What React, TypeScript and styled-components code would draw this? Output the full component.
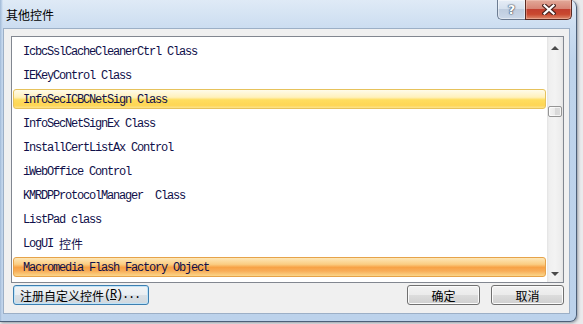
import React from "react";
import styled, { createGlobalStyle, css } from "styled-components";

type Tone = "plain" | "selected" | "hot";

interface ControlItem {
  label: string;
  tone?: Tone;
}

const controls: ControlItem[] = [
  { label: "IcbcSslCacheCleanerCtrl Class" },
  { label: "IEKeyControl Class" },
  { label: "InfoSecICBCNetSign Class", tone: "selected" },
  { label: "InfoSecNetSignEx Class" },
  { label: "InstallCertListAx Control" },
  { label: "iWebOffice Control" },
  { label: "KMRDPProtocolManager  Class" },
  { label: "ListPad class" },
  { label: "LogUI 控件" },
  { label: "Macromedia Flash Factory Object", tone: "hot" },
];

// where the list is scrolled to, as a share of the track
const scrollRatio = 0.27;
const trackHeight = 192;

const monoStack = `"Liberation Mono", "Courier New", monospace`;
const cjkStack = `"Noto Sans CJK SC", "Noto Sans", sans-serif`;

function splitCjk(text: string) {
  return text.split(/([\u4e00-\u9fff]+)/).filter(Boolean);
}

export default function App() {
  return (
    <>
      <GlobalStyle />
      <Window>
        <TitleBar>
          <Title>其他控件</Title>
          <CaptionButtons>
            <HelpButton>?</HelpButton>
            <CloseButton>
              <svg width="14" height="11" viewBox="0 0 14 11">
                <path d="M2.5 1.5 L11.5 9.5 M11.5 1.5 L2.5 9.5" stroke="#4b2621" strokeWidth="4.4" strokeLinecap="square" />
                <path d="M2.5 1.5 L11.5 9.5 M11.5 1.5 L2.5 9.5" stroke="#ffffff" strokeWidth="2.2" strokeLinecap="square" />
              </svg>
            </CloseButton>
          </CaptionButtons>
        </TitleBar>
        <Client>
          <ListBox>
            <Rows>
              {controls.map((item) => (
                <Row key={item.label}>
                  <Item tone={item.tone ?? "plain"}>
                    {splitCjk(item.label).map((part, i) =>
                      /[\u4e00-\u9fff]/.test(part) ? <Cjk key={i}>{part}</Cjk> : <span key={i}>{part}</span>
                    )}
                  </Item>
                </Row>
              ))}
            </Rows>
            <ScrollBar>
              <ArrowButton>
                <Arrow dir="up" />
              </ArrowButton>
              <Track>
                <Thumb style={{ marginTop: Math.round(trackHeight * scrollRatio) }} />
              </Track>
              <ArrowButton>
                <Arrow dir="down" />
              </ArrowButton>
            </ScrollBar>
          </ListBox>
          <ButtonRow>
            <Button focused wide>
              <Cjk>注册自定义控件</Cjk>
              <Latin>
                (<u>R</u>)...
              </Latin>
            </Button>
            <RightButtons>
              <Button>确定</Button>
              <Button>取消</Button>
            </RightButtons>
          </ButtonRow>
        </Client>
      </Window>
    </>
  );
}

const GlobalStyle = createGlobalStyle`
  html, body {
    margin: 0;
    padding: 0;
    background: #e9eaec;
    overflow: hidden;
  }
  * {
    box-sizing: border-box;
  }
  #root {
    width: 583px;
    height: 324px;
  }
`;

const Window = styled.div`
  width: 577px;
  height: 322px;
  display: flex;
  flex-direction: column;
  padding: 0 6px 7px 3px;
  border-right: 1px solid #4c5f78;
  border-bottom: 1px solid #4c5f78;
  border-radius: 0 7px 7px 0;
  background: linear-gradient(to right, #9fb8d6 0, #c3d6ec 2px, transparent 3px),
    linear-gradient(to bottom, #dfeaf6 0, #cddef1 26px, #bfd4ec 60px, #bcd2eb 100%);
  box-shadow: 1px 1px 3px rgba(40, 50, 70, 0.45);
`;

const TitleBar = styled.div`
  height: 28px;
  display: flex;
  align-items: flex-start;
`;

const Title = styled.div`
  margin-top: 7px;
  padding-left: 3px;
  font-family: ${cjkStack};
  font-size: 12px;
  line-height: 16px;
  color: #000;
`;

const CaptionButtons = styled.div`
  margin-left: auto;
  margin-right: -2px;
  display: flex;
  height: 20px;
`;

const HelpButton = styled.div`
  width: 28px;
  height: 20px;
  display: flex;
  align-items: center;
  justify-content: center;
  border: 1px solid #6c7c92;
  border-top: none;
  border-right: none;
  border-radius: 0 0 0 5px;
  background: linear-gradient(to bottom, #e6edf6 0%, #d6e1ee 45%, #bfcddf 50%, #cbd8e9 100%);
  box-shadow: inset 0 0 0 1px rgba(255, 255, 255, 0.45);
  font-family: "DejaVu Sans", sans-serif;
  font-weight: bold;
  font-size: 13px;
  color: #fff;
  text-shadow: 0 0 1px #3f4e63, 0 0 1px #3f4e63, 0 0 2px #3f4e63;
`;

const CloseButton = styled.div`
  width: 47px;
  height: 20px;
  display: flex;
  align-items: center;
  justify-content: center;
  border: 1px solid #5a2a22;
  border-top: none;
  border-radius: 0 0 5px 0;
  background: linear-gradient(to bottom, #e2a999 0%, #d78575 45%, #c2402f 50%, #c9482f 75%, #dd8a6c 100%);
  box-shadow: inset 0 0 0 1px rgba(255, 220, 210, 0.35);
`;

const Client = styled.div`
  flex: 1;
  display: flex;
  flex-direction: column;
  padding: 7px 5px 0 7px;
  background: #f0f0f0;
  border: 1px solid #9cafc6;
`;

const ListBox = styled.div`
  height: 247px;
  display: flex;
  border: 1px solid #828790;
  background: #fff;
`;

const Rows = styled.div`
  flex: 1;
  padding-top: 2px;
`;

const Row = styled.div`
  height: 24px;
  padding: 2px 1px;
`;

const toneStyles = {
  plain: css`
    border-color: transparent;
    background: transparent;
  `,
  selected: css`
    border-color: #e6c25c;
    background: linear-gradient(to bottom, #fffbea 0%, #fff1bc 40%, #ffdd5e 55%, #fed654 85%, #fde38a 100%);
  `,
  hot: css`
    border-color: #e6a34a;
    background: linear-gradient(to bottom, #fde7b8 0%, #fbcd82 35%, #f7a246 52%, #f8ad58 72%, #fbd68a 100%);
  `,
};

const Item = styled.div<{ tone: Tone }>`
  height: 20px;
  display: flex;
  align-items: center;
  padding: 1px 0 0 9px;
  border: 1px solid transparent;
  border-radius: 3px;
  white-space: pre;
  font-family: ${monoStack};
  font-size: 12px;
  letter-spacing: -1.2px;
  color: #10104a;
  ${({ tone }) => toneStyles[tone]}
`;

const Cjk = styled.span`
  font-family: ${cjkStack};
  font-size: 12px;
  letter-spacing: 0;
`;

const Latin = styled.span`
  font-family: ${monoStack};
  font-size: 12px;
  letter-spacing: -1.2px;
`;

const ScrollBar = styled.div`
  width: 16px;
  display: flex;
  flex-direction: column;
  background: linear-gradient(to right, #e3e3e3 0, #efefef 2px, #f3f3f3 8px, #ececec 14px, #e3e3e3 16px);
`;

const ArrowButton = styled.div`
  height: 17px;
  display: flex;
  align-items: center;
  justify-content: center;
`;

const Arrow = styled.div<{ dir: "up" | "down" }>`
  width: 0;
  height: 0;
  border-left: 4px solid transparent;
  border-right: 4px solid transparent;
  ${({ dir }) =>
    dir === "up"
      ? css`
          border-bottom: 4px solid #4a4a4a;
          margin-top: 4px;
        `
      : css`
          border-top: 4px solid #4a4a4a;
          margin-top: 1px;
        `}
`;

const Track = styled.div`
  flex: 1;
  padding: 0 1px;
`;

const Thumb = styled.div`
  height: 11px;
  border: 1px solid #959595;
  border-radius: 2px;
  background: linear-gradient(to right, #f4f4f4 0%, #e9e9e9 50%, #d8d8d8 50%, #dcdcdc 100%);
  box-shadow: inset 0 0 0 1px rgba(255, 255, 255, 0.7);
`;

const ButtonRow = styled.div`
  display: flex;
  margin-top: 2px;
  padding-left: 2px;
`;

const RightButtons = styled.div`
  margin-left: auto;
  display: flex;
  gap: 11px;
`;

const Button = styled.div<{ focused?: boolean; wide?: boolean }>`
  width: ${({ wide }) => (wide ? "136px" : "73px")};
  height: 20px;
  display: flex;
  align-items: center;
  justify-content: ${({ wide }) => (wide ? "flex-start" : "center")};
  padding-left: ${({ wide }) => (wide ? "6px" : "0")};
  border: 1px solid #707070;
  border-radius: 3px;
  background: linear-gradient(to bottom, #f2f2f2 0%, #ebebeb 50%, #dddddd 50%, #cfcfcf 100%);
  box-shadow: inset 0 0 0 1px #fbfbfb;
  font-family: ${cjkStack};
  font-size: 12px;
  color: #000;
  ${({ focused }) =>
    focused &&
    css`
      border-color: #3c7fb1;
      box-shadow: inset 0 0 0 1px #bfe3f8;
      background: linear-gradient(to bottom, #f1f4f6 0%, #e9eef2 50%, #d9e0e6 50%, #d0d8de 100%);
    `}
`;
